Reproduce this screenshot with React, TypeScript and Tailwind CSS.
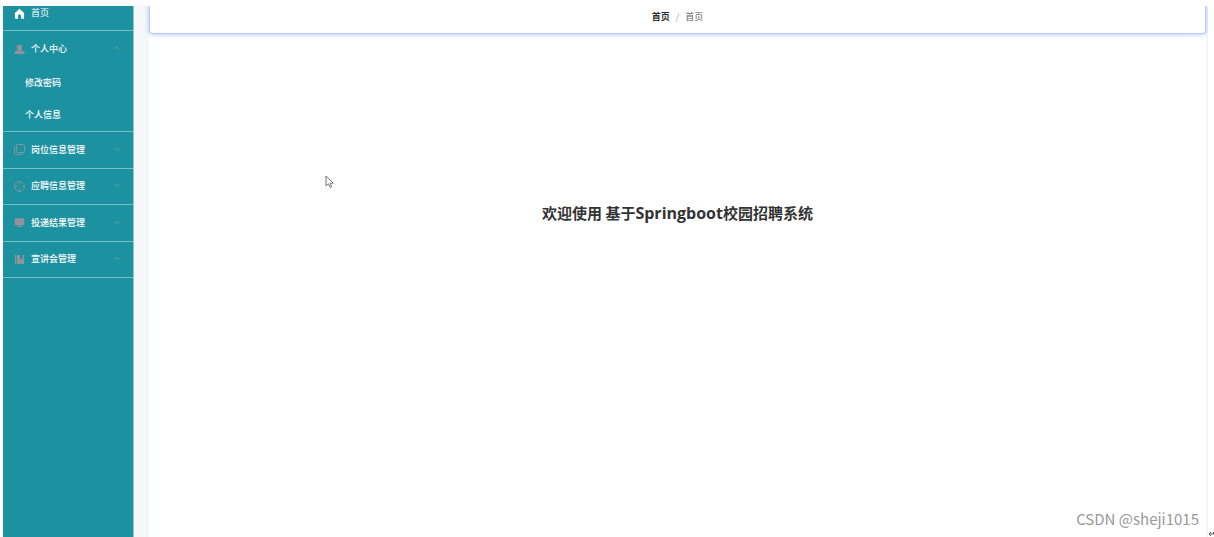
import type { ReactNode } from 'react';

const iconBox = 'h-[11px] w-[11px] shrink-0';

function HomeIcon() {
  return (
    <svg viewBox="0 0 12 12" className={iconBox} fill="#fff" aria-hidden="true">
      <path d="M6 .8 1 5.4V11a.6.6 0 0 0 .6.6h2.7V8.6a1.7 1.7 0 0 1 3.4 0v3h2.7A.6.6 0 0 0 11 11V5.4z" />
    </svg>
  );
}

function UserIcon() {
  return (
    <svg viewBox="0 0 12 12" className={iconBox} fill="#909399" aria-hidden="true">
      <path d="M6 .8a2.900 2.900 0 0 1 2.900 3.100c0 1.300-.6 2.300-1.500 2.900 2 .4 3.700 1 4 2.200v2H.6V9c.3-1.200 2-1.800 4-2.200C3.700 6.200 3.100 5.200 3.100 3.900A2.900 2.900 0 0 1 6 .8z" />
    </svg>
  );
}

function CopyIcon() {
  return (
    <svg viewBox="0 0 11 11" className={iconBox} fill="none" stroke="#7f959d" aria-hidden="true">
      <rect x="2.500" y="0.500" width="8" height="8" rx="1" />
      <path d="M2.500 2.500h-1a1 1 0 0 0-1 1v6a1 1 0 0 0 1 1h6a1 1 0 0 0 1-1v-1" />
    </svg>
  );
}

function AimIcon() {
  return (
    <svg viewBox="0 0 11 11" className={iconBox} fill="none" stroke="#7f959d" aria-hidden="true">
      <circle cx="5.500" cy="5.500" r="5" />
      <path d="M5.500 1v2.500M5.500 7.500V10M1 5.500h2.500M7.500 5.500H10" />
    </svg>
  );
}

function MonitorIcon() {
  return (
    <svg viewBox="0 0 12 12" className={iconBox} fill="#909399" aria-hidden="true">
      <path d="M1.500 1.300h9a.7.7 0 0 1 .7.7v6.300a.7.7 0 0 1-.7.7H7v1h2v.8H3V10h2V9H1.500a.7.7 0 0 1-.7-.7V2a.7.7 0 0 1 .7-.7z" />
    </svg>
  );
}

function BookIcon() {
  return (
    <svg viewBox="0 0 12 12" className={iconBox} fill="#909399" aria-hidden="true">
      <path d="M1 1h1.600v10H1zM3.300 1h3.400v5l1.300-1 1.300 1V1H11v10H3.300z" />
    </svg>
  );
}

function Chevron({ up = false }: { up?: boolean }) {
  return (
    <svg viewBox="0 0 8 8" className="ml-auto h-2 w-2" fill="none" stroke="#6f9ba4" strokeWidth="0.9" aria-hidden="true">
      <path d={up ? 'M1.500 4.500 4 2l2.500 2.500' : 'M1.500 2 4 4.500 6.500 2'} />
    </svg>
  );
}

function MenuButton({ icon, label, open = false }: { icon: ReactNode; label: string; open?: boolean }) {
  return (
    <button type="button" aria-expanded={open} className="flex w-full items-center gap-[6px] pl-[11px] pr-3 font-medium">
      {icon}
      <span>{label}</span>
      <Chevron up={open} />
    </button>
  );
}

const groups = [
  { label: '岗位信息管理', icon: <CopyIcon /> },
  { label: '应聘信息管理', icon: <AimIcon /> },
  { label: '投递结果管理', icon: <MonitorIcon /> },
  { label: '宣讲会管理', icon: <BookIcon /> },
];

export default function App() {
  return (
    <div className="relative flex h-screen overflow-hidden bg-white pl-[3px] pr-[6px] pt-[6px] font-['Noto_Sans_CJK_SC',sans-serif]">
      <aside className="w-[131px] shrink-0 border-r border-[#8ccad0] bg-[#1c919f] text-[9px] leading-[14px] text-white">
        <nav>
          <a href="#home" className="flex h-[25px] items-start gap-[6px] border-b border-[#79bec7] pl-[11px]">
            <span className="flex h-[15px] items-center"><HomeIcon /></span>
            <span>首页</span>
          </a>
          <div className="border-b border-[#79bec7]">
            <div className="flex h-9 items-center">
              <MenuButton icon={<UserIcon />} label="个人中心" open />
            </div>
            <a href="#password" className="flex h-8 items-center pl-[22px] font-medium">修改密码</a>
            <a href="#profile" className="flex h-8 items-center pl-[22px] font-medium">个人信息</a>
          </div>
          <div className="flex h-[146px] flex-col">
            {groups.map((group) => (
              <div key={group.label} className="flex flex-1 items-center border-b border-[#79bec7]">
                <MenuButton icon={group.icon} label={group.label} />
              </div>
            ))}
          </div>
        </nav>
      </aside>

      <div className="flex min-w-0 flex-1 flex-col overflow-hidden bg-[#f5f7fa] pl-[15px] pr-[2px]">
        <header className="z-10 flex h-7 items-center justify-center rounded-b-sm border border-t-0 border-[#bccafd] bg-white pb-[5px] text-[9px] leading-[14px] shadow-[0_0_4px_1px_rgba(170,188,255,0.7)]">
          <nav aria-label="breadcrumb" className="flex gap-[6px]">
            <a href="#home" className="font-bold text-[#303133]">首页</a>
            <span className="text-[#a0a4ac]">/</span>
            <span className="text-[#606266]">首页</span>
          </nav>
        </header>
        <main className="flex-1 bg-white pt-[167px] text-center">
          <h1 className="text-[15px] font-bold leading-6 text-[#333]">
            欢迎使用 基于<span className="font-['Open_Sans','Noto_Sans',sans-serif] text-base">Springboot</span>校园招聘系统
          </h1>
        </main>
      </div>

      <svg viewBox="0 0 10 14" className="absolute left-[325px] top-[175px] h-[14px] w-[10px]" fill="#fff" stroke="#666" strokeWidth="0.9" aria-hidden="true">
        <path d="M1 1v10l2.400-2.200L5 12.300l1.700-.8-1.600-3.300h3.200z" />
      </svg>
      <p className="absolute bottom-2 right-[15px] text-[15px] leading-5 text-[#999]">CSDN @sheji1015</p>
      <svg viewBox="0 0 6 6" className="absolute bottom-0 right-0 h-[6px] w-[6px]" fill="none" stroke="#555" aria-hidden="true">
        <path d="M5.500 1v2H1M3 1 1 3l2 2" />
      </svg>
    </div>
  );
}
